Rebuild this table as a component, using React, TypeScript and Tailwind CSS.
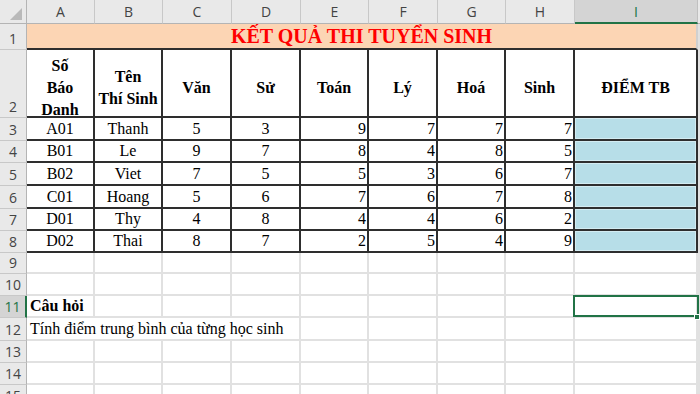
import React from "react";

const serif = "font-['Liberation_Serif','Times_New_Roman',serif]";
const sans = "font-['Open_Sans','Liberation_Sans',sans-serif]";

const cols = ["A", "B", "C", "D", "E", "F", "G", "H", "I"];

const data: [string, string, number, number, number, number, number, number][] = [
  ["A01", "Thanh", 5, 3, 9, 7, 7, 7],
  ["B01", "Le", 9, 7, 8, 4, 8, 5],
  ["B02", "Viet", 7, 5, 5, 3, 6, 7],
  ["C01", "Hoang", 5, 6, 7, 6, 7, 8],
  ["D01", "Thy", 4, 8, 4, 4, 6, 2],
  ["D02", "Thai", 8, 7, 2, 5, 4, 9],
];

function RowHead({ n, selected }: { n: number; selected?: boolean }) {
  return (
    <div
      className={`box-border flex items-end justify-center pb-[1px] border-b border-[#c8c8c8] text-[14px] font-medium leading-[18px] ${sans} ${
        selected
          ? "bg-[#d4d4d4] text-[#217346] border-r-2 border-r-[#217346]"
          : "bg-[#e9e9e9] text-[#444] border-r border-r-[#b4b4b4]"
      }`}
    >
      {n}
    </div>
  );
}

function Grid({ children, className = "" }: { children?: React.ReactNode; className?: string }) {
  return (
    <div className={`box-border border-r-2 border-b-2 border-[#e1e1e1] ${className}`}>{children}</div>
  );
}

function Tbl({ children, className = "" }: { children?: React.ReactNode; className?: string }) {
  return (
    <div
      className={`box-border flex border-r-2 border-b-2 border-[#2e2e2e] text-[16px] leading-[20px] text-black ${serif} ${className}`}
    >
      {children}
    </div>
  );
}

function EmptyRow({ n }: { n: number }) {
  return (
    <>
      <RowHead n={n} />
      {cols.map((c) => (
        <Grid key={c} />
      ))}
      <Grid />
    </>
  );
}

export default function App() {
  return (
    <div className="w-[700px] h-[394px] overflow-hidden bg-white">
      <div className="grid grid-cols-[27px_68px_68px_69px_69px_68px_69px_68px_69px_123px_1fr] grid-rows-[24px_26px_68px_23px_22px_23px_23px_22px_22px_21px_22px_22px_23px_22px_22px_22px]">
        {/* column header row */}
        <div className="box-border relative bg-[#e9e9e9] border-r border-b border-[#b4b4b4]">
          <svg className="absolute left-0 top-0" width="27" height="24" viewBox="0 0 27 24">
            <polygon points="22,8 22,20 10,20" fill="#b9b9b9" />
          </svg>
        </div>
        {cols.map((c) =>
          c === "I" ? (
            <div
              key={c}
              className={`box-border flex items-center justify-center bg-[#d4d4d4] border-r border-r-[#c0c0c0] border-b-2 border-b-[#217346] text-[14px] text-[#217346] ${sans}`}
            >
              {c}
            </div>
          ) : (
            <div
              key={c}
              className={`box-border flex items-center justify-center bg-[#e9e9e9] border-r border-[#c8c8c8] border-b border-b-[#b4b4b4] text-[14px] text-[#444] ${sans}`}
            >
              {c}
            </div>
          )
        )}
        <div className="box-border bg-[#e9e9e9] border-b border-[#b4b4b4]" />

        {/* row 1 */}
        <RowHead n={1} />
        <div
          className={`col-span-9 box-border flex items-end justify-center bg-[#fcd5b4] border-b-2 border-b-[#2e2e2e] border-r-2 border-r-[#d0d0d0] text-[20px] leading-[24px] font-bold text-[#ff0000] ${serif}`}
        >
          KẾT QUẢ THI TUYỂN SINH
        </div>
        <Grid />

        {/* row 2 headers */}
        <RowHead n={2} />
        {[
          <>Số<br />Báo<br />Danh</>,
          <>Tên<br />Thí Sinh</>,
          <>Văn</>,
          <>Sử</>,
          <>Toán</>,
          <>Lý</>,
          <>Hoá</>,
          <>Sinh</>,
          <>ĐIỂM TB</>,
        ].map((h, i) => (
          <Tbl key={i} className="items-center justify-center pt-[10px] text-center font-bold text-[#800080] leading-[22px]">
            <div>{h}</div>
          </Tbl>
        ))}
        <Grid />

        {/* data rows */}
        {data.map((r, ri) => (
          <React.Fragment key={ri}>
            <RowHead n={ri + 3} />
            {r.map((v, ci) => (
              <Tbl
                key={ci}
                className={`items-end ${ci < 4 ? "justify-center" : "justify-end pr-[1px]"}`}
              >
                {v}
              </Tbl>
            ))}
            <Tbl className="bg-[#b7dee8] shadow-[inset_0_0_0_1px_#d3ecf2]" />
            <Grid />
          </React.Fragment>
        ))}

        <EmptyRow n={9} />
        <EmptyRow n={10} />

        {/* row 11 */}
        <RowHead n={11} selected />
        <Grid className={`flex items-end pl-[3px] text-[16px] leading-[20px] font-bold text-black ${serif}`}>
          Câu hỏi
        </Grid>
        {cols.slice(1).map((c) =>
          c === "I" ? (
            <Grid key={c} className="relative">
              <div className="absolute left-[-2px] top-[-1px] right-[-3px] bottom-[-1px] border-2 border-[#217346]" />
              <div className="absolute right-[-4px] bottom-[-4px] w-[6px] h-[6px] bg-[#217346] border border-white" />
            </Grid>
          ) : (
            <Grid key={c} />
          )
        )}
        <Grid />

        {/* row 12 */}
        <RowHead n={12} />
        <Grid className={`col-span-4 flex items-end pl-[3px] text-[16px] leading-[20px] text-black whitespace-nowrap ${serif}`}>
          Tính điểm trung bình của từng học sinh
        </Grid>
        {cols.slice(4).map((c) => (
          <Grid key={c} />
        ))}
        <Grid />

        <EmptyRow n={13} />
        <EmptyRow n={14} />
        <EmptyRow n={15} />
      </div>
    </div>
  );
}
